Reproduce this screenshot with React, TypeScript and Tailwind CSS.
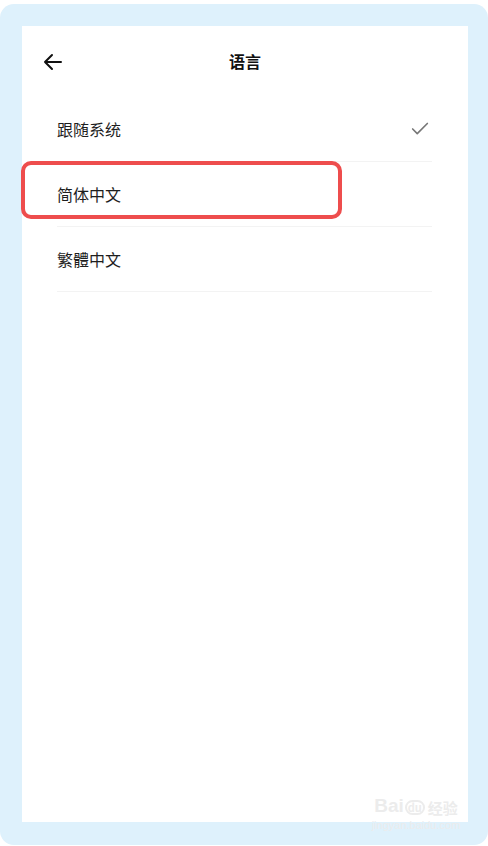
import { Check } from 'lucide-react'

const LANGS = [
  { label: '跟随系统', checked: true },
  { label: '简体中文', checked: false },
  { label: '繁體中文', checked: false },
]

export default function App() {
  return (
    <div
      className="w-[488px] h-[846px] bg-white pt-[4px]"
      style={{ fontFamily: '"Noto Sans CJK SC", "Noto Sans", sans-serif' }}
    >
      <div className="relative h-[841px] rounded-[14px] bg-[#def1fc] pl-[22px] pr-[20px] pt-[22px] pb-[23px]">
        <div className="h-full bg-white">
          <div className="relative h-[71px] flex items-center justify-center">
            <svg
              className="absolute left-[21px] top-[27px]"
              width="20"
              height="18"
              viewBox="0 0 20 18"
              fill="none"
              stroke="#111"
              strokeWidth="2"
              strokeLinecap="round"
              strokeLinejoin="round"
            >
              <path d="M18 9H2M9 2L2 9l7 7" />
            </svg>
            <span className="text-[16px] font-bold text-[#111] -mt-[2px]">语言</span>
          </div>

          <div className="pl-[35px] pr-[36px]">
            {LANGS.map((l) => (
              <div key={l.label} className="h-[65px] flex items-center justify-between border-b border-[#f3f3f3]">
                <span className="text-[16px] text-[#1e1e1e]">{l.label}</span>
                {l.checked && <Check size={22} strokeWidth={1.8} className="text-[#777] mr-[1px]" />}
              </div>
            ))}
          </div>
        </div>

        {/* red highlight box over the second option */}
        <div className="absolute left-[21px] top-[157px] w-[321px] h-[58px] rounded-[10px] border-[4px] border-[#ee4d4d]" />

        {/* faint watermark */}
        <div className="absolute left-[370px] top-[792px] w-[92px] flex flex-col items-center text-[#ececec] leading-none select-none">
          <div className="flex items-end gap-[1px]">
            <span className="text-[19px] font-bold" style={{ fontFamily: '"Liberation Sans", sans-serif' }}>Bai</span>
            <span className="text-[11px] font-bold border-2 border-[#ececec] rounded-full px-[1px]">du</span>
            <span className="text-[15px] font-bold ml-[2px]">经验</span>
          </div>
          <span className="text-[11px] mt-[5px]" style={{ fontFamily: '"Liberation Sans", sans-serif' }}>jingyan.baidu.com</span>
        </div>
      </div>
    </div>
  )
}
